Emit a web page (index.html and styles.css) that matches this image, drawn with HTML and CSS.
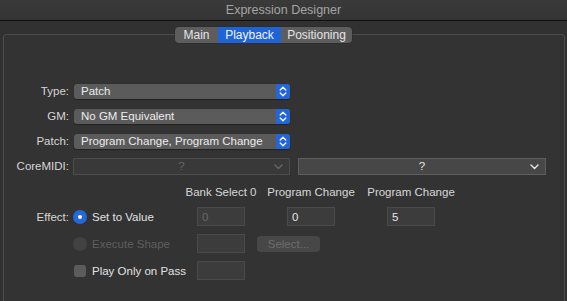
FILE: index.html
```html
<!DOCTYPE html>
<html lang="en">
<head>
  <meta charset="UTF-8">
  <title>Expression Designer</title>
  <link rel="stylesheet" href="styles.css">
</head>
<body>
  <div class="titlebar">Expression Designer</div>

  <div class="window">
    <div class="group">
      <!-- Tab switcher sits on the group border -->
      <div class="tabs">
        <span class="tab">Main</span>
        <span class="tab active">Playback</span>
        <span class="tab">Positioning</span>
      </div>

      <div class="form">
        <div class="row">
          <label class="lbl">Type:</label>
          <div class="popup">
            <span class="value">Patch</span>
            <span class="stepper"><svg width="8" height="11" viewBox="0 0 8 11"><path d="M1.2 4 L4 1.3 L6.8 4 M1.2 7 L4 9.7 L6.8 7" fill="none" stroke="#fff" stroke-width="1.3" stroke-linecap="round" stroke-linejoin="round"/></svg></span>
          </div>
        </div>
        <div class="row">
          <label class="lbl">GM:</label>
          <div class="popup">
            <span class="value">No GM Equivalent</span>
            <span class="stepper"><svg width="8" height="11" viewBox="0 0 8 11"><path d="M1.2 4 L4 1.3 L6.8 4 M1.2 7 L4 9.7 L6.8 7" fill="none" stroke="#fff" stroke-width="1.3" stroke-linecap="round" stroke-linejoin="round"/></svg></span>
          </div>
        </div>
        <div class="row">
          <label class="lbl">Patch:</label>
          <div class="popup">
            <span class="value">Program Change, Program Change</span>
            <span class="stepper"><svg width="8" height="11" viewBox="0 0 8 11"><path d="M1.2 4 L4 1.3 L6.8 4 M1.2 7 L4 9.7 L6.8 7" fill="none" stroke="#fff" stroke-width="1.3" stroke-linecap="round" stroke-linejoin="round"/></svg></span>
          </div>
        </div>
        <div class="row">
          <label class="lbl">CoreMIDI:</label>
          <div class="pulldown disabled">
            <span class="value">?</span>
            <svg class="chev" width="9" height="6" viewBox="0 0 9 6"><path d="M1 1 L4.5 4.5 L8 1" fill="none" stroke="currentColor" stroke-width="1.4" stroke-linecap="round" stroke-linejoin="round"/></svg>
          </div>
          <div class="pulldown wide">
            <span class="value">?</span>
            <svg class="chev" width="9" height="6" viewBox="0 0 9 6"><path d="M1 1 L4.5 4.5 L8 1" fill="none" stroke="currentColor" stroke-width="1.4" stroke-linecap="round" stroke-linejoin="round"/></svg>
          </div>
        </div>

        <div class="heads">
          <span class="head">Bank Select 0</span>
          <span class="head gap2">Program Change</span>
          <span class="head gap3">Program Change</span>
        </div>

        <div class="frow first">
          <label class="lbl">Effect:</label>
          <div class="option"><span class="radio on"></span>Set to Value</div>
          <input class="field" type="text" value="0" disabled>
          <input class="field gap2" type="text" value="0">
          <input class="field gap3" type="text" value="5">
        </div>
        <div class="frow">
          <span class="lbl"></span>
          <div class="option dim"><span class="radio off"></span>Execute Shape</div>
          <input class="field" type="text" disabled>
          <button class="btn" disabled>Select...</button>
        </div>
        <div class="frow">
          <span class="lbl"></span>
          <div class="option"><span class="check"></span>Play Only on Pass</div>
          <input class="field" type="text" disabled>
        </div>
      </div>
    </div>
  </div>
</body>
</html>
```

FILE: styles.css
```css
html, body {
  height: 301px;
}
body {
  margin: 0;
  background: #313131;
  font-family: "Liberation Sans", Arial, sans-serif;
  font-size: 11.5px;
  color: #dcdcdc;
  overflow: hidden;
}
.titlebar {
  height: 20px;
  line-height: 20px;
  text-align: center;
  font-size: 12.5px;
  color: #a4a4a4;
  background: linear-gradient(#3a3a3a, #343434);
  border-bottom: 1px solid #111;
}
.window {
  padding: 13px 2px 0 3px;
}
.group {
  border: 1px solid #4c4c4c;
  border-bottom: none;
  border-radius: 4px 4px 0 0;
  background: #333333;
  height: 266px;
}
.tabs {
  display: flex;
  width: 177px;
  height: 16px;
  margin: -8px 0 0 171px;
  background: #5d5d5d;
  border-radius: 4px;
  overflow: hidden;
  box-shadow: 0 0 0 0.5px #2a2a2a;
}
.tab {
  line-height: 16px;
  font-size: 12px;
  color: #e4e4e4;
  text-align: center;
}
.tab:nth-child(1) { width: 43px; }
.tab:nth-child(2) { width: 63px; }
.tab:nth-child(3) { width: 71px; }
.tab.active {
  background: #2063d7;
  color: #f2f2f2;
}
.form {
  padding-top: 40px;
}
.row {
  display: flex;
  align-items: center;
  height: 16px;
  margin-bottom: 9px;
}
.lbl {
  width: 65px;
  flex: none;
  text-align: right;
  margin-right: 5px;
  color: #d6d6d6;
}
.popup {
  display: flex;
  width: 216px;
  height: 15px;
  background: #5b5b5b;
  border-radius: 3px;
  overflow: hidden;
  box-shadow: 0 0.5px 1px #222;
}
.popup .value {
  flex: 1;
  padding-left: 7px;
  line-height: 15px;
  color: #ececec;
}
.popup .stepper {
  width: 14px;
  display: flex;
  align-items: center;
  justify-content: center;
  background: #2366d9;
}
.pulldown {
  position: relative;
  height: 15px;
  border: 1px solid #4c4c4c;
  display: flex;
  align-items: center;
  justify-content: center;
}
.pulldown.disabled {
  width: 215px;
  margin-left: -1px;
  background: #393939;
  color: #666;
}
.pulldown.wide {
  width: 246px;
  margin-left: 8px;
  background: #474747;
  border-color: #5e5e5e;
  color: #e8e8e8;
}
.pulldown .chev {
  position: absolute;
  right: 6px;
  top: 5px;
}
.heads {
  display: flex;
  padding-left: 193px;
  margin-top: 12px;
  height: 14px;
}
.head {
  width: 48px;
  display: flex;
  justify-content: center;
  white-space: nowrap;
  color: #d8d8d8;
}
.gap2 { margin-left: 42px; }
.gap3 { margin-left: 52px; }
.frow {
  display: flex;
  align-items: center;
  height: 19px;
  margin-bottom: 8px;
}
.frow.first {
  margin-top: 7px;
}
.option {
  width: 124px;
  flex: none;
  display: flex;
  align-items: center;
  color: #e2e2e2;
  margin-left: -1px;
}
.option.dim {
  color: #5f5f5f;
}
.radio {
  width: 14px;
  height: 14px;
  border-radius: 50%;
  margin-right: 5px;
  display: flex;
  align-items: center;
  justify-content: center;
}
.radio.on {
  background: #2469dc;
}
.radio.on::after {
  content: "";
  width: 4px;
  height: 4px;
  border-radius: 50%;
  background: #fff;
}
.radio.off {
  background: #424242;
}
.check {
  width: 12px;
  height: 12px;
  border-radius: 3px;
  background: #5c5c5c;
  margin: 0 6px 0 1px;
}
.field {
  box-sizing: border-box;
  width: 48px;
  height: 19px;
  background: #3c3c3c;
  border: 1px solid #4a4a4a;
  font: inherit;
  color: #e6e6e6;
  padding: 0 4px;
}
.field:disabled {
  color: #666;
}
.btn {
  margin-left: 12px;
  width: 63px;
  height: 16px;
  background: #474747;
  border: none;
  border-radius: 4px;
  font: inherit;
  color: #6e6e6e;
  padding: 0;
}
```
